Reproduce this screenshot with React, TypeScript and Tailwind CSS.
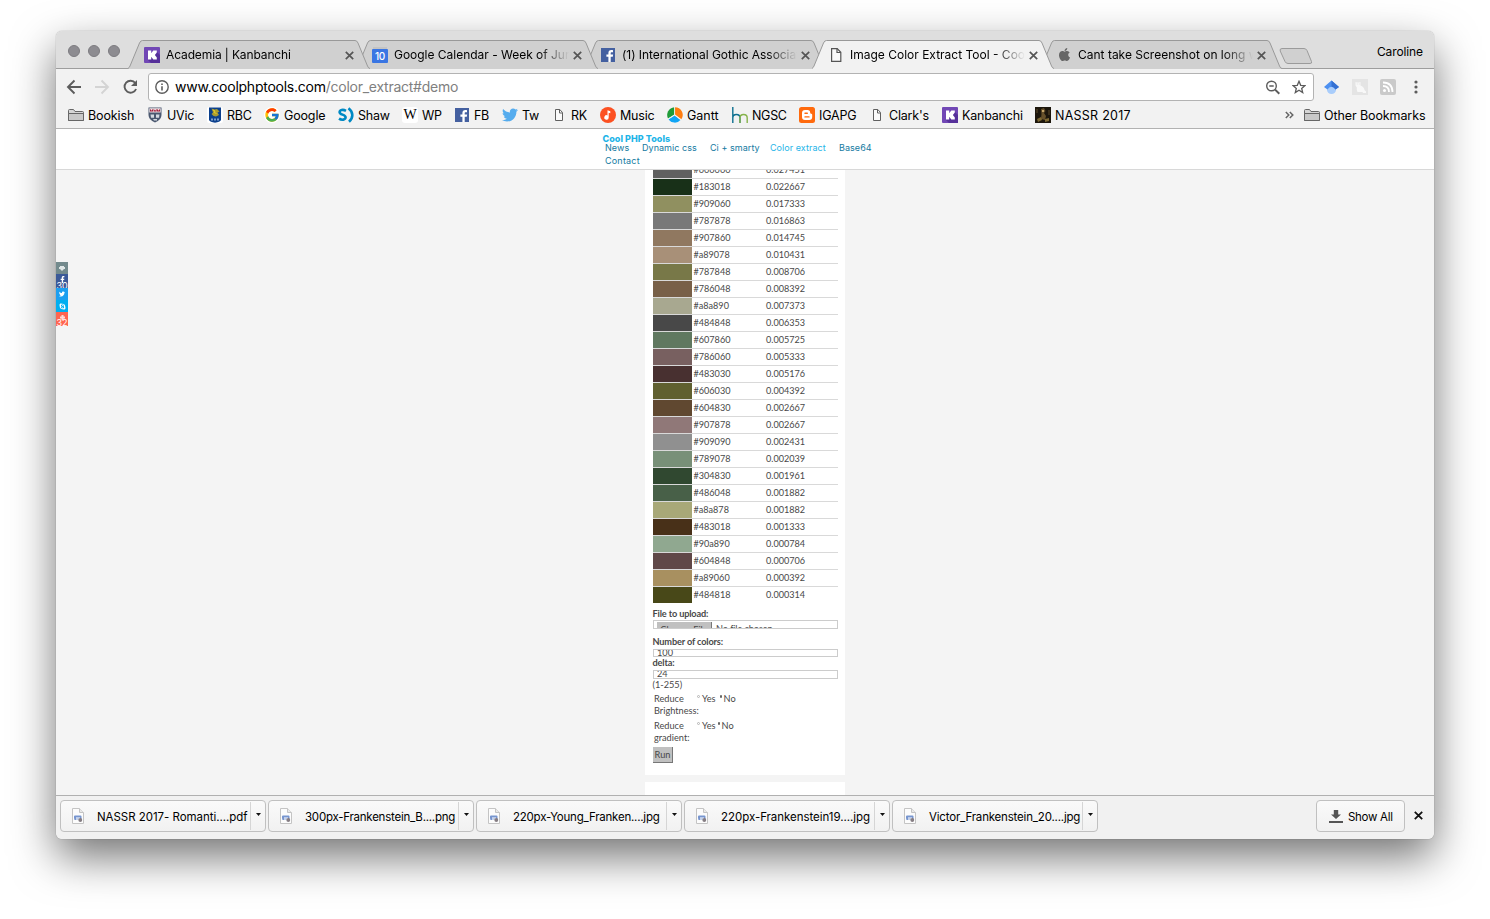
import React from "react";
import { FaFacebookF, FaTwitter, FaApple, FaSkype } from "react-icons/fa";
import { FcGoogle } from "react-icons/fc";

function KanbanchiIcon() {
  return (
    <svg width="16" height="16" viewBox="0 0 16 16" className="shrink-0">
      <rect width="16" height="16" rx="1" fill="#7147b5" />
      <path d="M12 4l4 4v8H7l-3-3z" fill="#56309a" />
      <path d="M4 3.500h3.200v2.700L9.300 3.500H12.800v2L10.900 8l1.900 2.500v2H9.300L7.200 9.800v2.700H4z" fill="#fff" />
    </svg>
  );
}

function CalendarIcon() {
  return (
    <span className="flex h-4 w-4 shrink-0 flex-col">
      <span className="mx-px h-[2px] bg-[#c4c4c4]" />
      <span className="flex h-[14px] items-center justify-center rounded-[1px] bg-[#3a76e3] text-[10px] font-medium leading-none tracking-[-0.3px] text-white">10</span>
    </span>
  );
}

function FacebookIcon() {
  return (
    <svg width="16" height="16" viewBox="0 0 16 16" className="shrink-0">
      <rect x="1" y="1" width="14" height="14" fill="#4460a0" />
      <path d="M10.700 15V9.800h2.100l.3-2.300h-2.400V6.300c0-.6.2-1 1-1h1.300V3.200c-.2 0-.9-.1-1.700-.1-1.800 0-2.900 1-2.900 2.900v1.500H6.400v2.300h2V15z" fill="#fff" />
    </svg>
  );
}

function PageIcon() {
  return (
    <svg width="16" height="16" viewBox="0 0 16 16" className="shrink-0" fill="#fafafa" stroke="#606060" strokeWidth="1">
      <path d="M4.500 2.500h4.300L11.500 5.500v8h-7z" />
      <path d="M8.500 2.500v3.500h3" fill="none" />
    </svg>
  );
}

function TallPageIcon() {
  return (
    <svg width="16" height="16" viewBox="0 0 16 16" className="shrink-0" fill="#fafafa" stroke="#555" strokeWidth="1.200">
      <path d="M3.600 1.600h5.600l3.600 3.700v9.100H3.600z" />
      <path d="M9 1.600v3.900h3.800" fill="none" />
    </svg>
  );
}

function FolderIcon() {
  return (
    <svg width="16" height="16" viewBox="0 0 16 16" className="shrink-0" fill="#c9c9c9" stroke="#666" strokeWidth="1">
      <path d="M.5 13.500V3.500q0-1 1-1h4l1.500 2h7.500q1 0 1 1v8z" fill="#d6d6d6" />
      <path d="M.5 6.500h15v7H.5z" />
    </svg>
  );
}

function UvicIcon() {
  return (
    <svg width="16" height="16" viewBox="0 0 16 16" className="shrink-0">
      <path d="M1.500 .5h13v7.500q0 5-6.500 7.500Q1.500 13 1.500 8z" fill="#4b5870" />
      <path d="M2.300 1.200h11.400V5.500H2.300z" fill="#f1e3e6" />
      <path d="M3 1.800l1.500 2L6 1.800v2.700H3zM6.600 1.800l1.500 2 1.500-2v2.700h-3zM10 1.800l1.500 2 1.500-2v2.700h-3z" fill="#a31d3a" />
      <path d="M3.500 7.500H7v3.200H4zM9 7.500h3.500l-.5 3.200H9zM6 12h4v1.500H7z" fill="#d5d9e0" />
    </svg>
  );
}

function RbcIcon() {
  return (
    <svg width="16" height="16" viewBox="0 0 16 16" className="shrink-0">
      <rect width="16" height="16" rx="2" fill="#fff" />
      <path d="M2 .5h12V13q-1 2.200-6 2.700Q3 15.200 2 13z" fill="#0b3f8c" />
      <path d="M4.500 1.500l3 1 2.500-.5 2.500 2.500-2 1 1.500 2.500L9 9.500 6.500 9 4.500 7 6 5.500z" fill="#a99b2f" />
      <path d="M6 3l2 1-1 1.500 2.500 1" stroke="#e8cf2a" fill="none" />
      <path d="M4 11.500h2v2H4zM7 11.500h2v2H7zM10 11.500h2v2h-2z" fill="#7f9fcb" />
    </svg>
  );
}

function ShawIcon() {
  return (
    <svg width="16" height="16" viewBox="0 0 16 16" className="shrink-0" fill="none" stroke="#0089c4" strokeWidth="2.600">
      <path d="M8 3.800C5 2.200 1.600 2.900 1.600 5.200 1.600 8 7.600 7.300 7.600 10.300c0 2.500-3.800 3.200-6.600 1.400" />
      <path d="M10.500 1.200c5 4 5 9.600.5 13.600" />
    </svg>
  );
}

function WikiIcon() {
  return (
    <span className="flex h-4 w-4 shrink-0 items-center justify-center rounded-[3px] bg-white font-['Liberation_Serif',serif] text-[14px] leading-none text-black">W</span>
  );
}

function MusicIcon() {
  return (
    <svg width="16" height="16" viewBox="0 0 16 16" className="shrink-0">
      <circle cx="8" cy="8" r="8" fill="#fc5122" />
      <path d="M7.500 3.200l2.800 1v2l-1.600-.5v4.800a2.200 2.200 0 1 1-1.200-2z" fill="#fff" />
    </svg>
  );
}

function GanttIcon() {
  return (
    <svg width="16" height="16" viewBox="0 0 16 16" className="shrink-0">
      <path d="M8 7.500V.2a7.800 7.800 0 0 1 6.400 12.100z" fill="#ff7d0f" />
      <path d="M7.300 7.500V.2A7.800 7.800 0 0 0 1 11.500z" fill="#1f9b38" />
      <path d="M7.600 8.600L1.500 12.500a7.800 7.800 0 0 0 12 .6z" fill="#10a5f5" />
      <path d="M7.600 8V0M7.600 8L.8 12.200M7.600 8l6.700 5" stroke="#f2f2f2" strokeWidth=".8" />
    </svg>
  );
}

function HmIcon() {
  return (
    <svg width="16" height="16" viewBox="0 0 16 16" className="shrink-0" fill="none" strokeWidth="1.400">
      <path d="M.8 0v16M.8 11q0-3.500 3.600-3.500T8 11v5" stroke="#0d6f8f" />
      <path d="M8 16v-5q0-3.500 3.600-3.500T15.200 11v5" stroke="#86b34b" />
    </svg>
  );
}

function BloggerIcon() {
  return (
    <svg width="16" height="16" viewBox="0 0 16 16" className="shrink-0">
      <rect width="16" height="16" rx="2.500" fill="#ff6a0d" />
      <path d="M6 3h2.500q2.700 0 2.700 2.700 0 1 1 1 1 0 1 1V10q0 3-3 3H6q-3 0-3-3V6q0-3 3-3z" fill="#fff" />
      <path d="M6 6.200h2.300M6 9.900h4" stroke="#ff6a0d" strokeWidth="1.400" strokeLinecap="round" />
    </svg>
  );
}

function PaintingIcon() {
  return (
    <svg width="16" height="16" viewBox="0 0 16 16" className="shrink-0">
      <rect width="16" height="16" fill="#1c160c" />
      <path d="M6 2l3-1 1.500 3L9 6l2 3-1 4-4-1 .500-5z" fill="#66502a" />
      <path d="M7 3h2v2H7z" fill="#c3a468" />
      <path d="M2 12l4-2 1 3-4 2zM10 12l4-1v3l-4 1z" fill="#7d6832" />
      <path d="M1 2h2v4H1zM13 3h2v5h-2z" fill="#3b2f1b" />
    </svg>
  );
}

const TAB_Z = ["z-[5]", "z-[4]", "z-[3]", "z-[10]", "z-[1]"];

const tabs = [
  { title: "Academia | Kanbanchi", icon: <KanbanchiIcon />, track: "tracking-[-0.12px]" },
  { title: "Google Calendar - Week of June", icon: <CalendarIcon />, track: "tracking-[-0.02px]" },
  { title: "(1) International Gothic Association", icon: <FacebookIcon />, track: "tracking-[-0.05px]" },
  { title: "Image Color Extract Tool - Cool", icon: <TallPageIcon />, track: "tracking-[0px]", active: true },
  { title: "Cant take Screenshot on long w", icon: <FaApple size={15} color="#666" className="shrink-0" />, track: "tracking-[0px]" },
];

const bookmarks = [
  { label: "Bookish", icon: <FolderIcon />, w: "w-[79px]", track: "tracking-[-0.12px]" },
  { label: "UVic", icon: <UvicIcon />, w: "w-[60px]", track: "tracking-[-0.2px]" },
  { label: "RBC", icon: <RbcIcon />, w: "w-[57px]", track: "tracking-[-0.2px]" },
  { label: "Google", icon: <FcGoogle size={16} className="shrink-0 rounded-full bg-white" />, w: "w-[74px]", track: "tracking-[-0.15px]" },
  { label: "Shaw", icon: <ShawIcon />, w: "w-[64px]", track: "tracking-[-0.2px]" },
  { label: "WP", icon: <WikiIcon />, w: "w-[52px]", track: "tracking-[-0.3px]" },
  { label: "FB", icon: <FacebookIcon />, w: "w-[48px]", track: "tracking-[-0.3px]" },
  { label: "Tw", icon: <FaTwitter size={16} color="#55acee" className="shrink-0" />, w: "w-[49px]", track: "tracking-[-0.2px]" },
  { label: "RK", icon: <PageIcon />, w: "w-[49px]", track: "tracking-[-0.3px]" },
  { label: "Music", icon: <MusicIcon />, w: "w-[67px]", track: "tracking-[-0.2px]" },
  { label: "Gantt", icon: <GanttIcon />, w: "w-[65px]", track: "tracking-[0px]" },
  { label: "NGSC", icon: <HmIcon />, w: "w-[67px]", track: "tracking-[-0.3px]" },
  { label: "IGAPG", icon: <BloggerIcon />, w: "w-[70px]", track: "tracking-[-0.2px]" },
  { label: "Clark's", icon: <PageIcon />, w: "w-[73px]", track: "tracking-[-0.2px]" },
  { label: "Kanbanchi", icon: <KanbanchiIcon />, w: "w-[93px]", track: "tracking-[-0.2px]" },
  { label: "NASSR 2017", icon: <PaintingIcon />, w: "w-[110px]", track: "tracking-[0.25px]" },
];

const colors: [string, string][] = [
  ["606060", "0.027451"], ["183018", "0.022667"], ["909060", "0.017333"], ["787878", "0.016863"],
  ["907860", "0.014745"], ["a89078", "0.010431"], ["787848", "0.008706"], ["786048", "0.008392"],
  ["a8a890", "0.007373"], ["484848", "0.006353"], ["607860", "0.005725"], ["786060", "0.005333"],
  ["483030", "0.005176"], ["606030", "0.004392"], ["604830", "0.002667"], ["907878", "0.002667"],
  ["909090", "0.002431"], ["789078", "0.002039"], ["304830", "0.001961"], ["486048", "0.001882"],
  ["a8a878", "0.001882"], ["483018", "0.001333"], ["90a890", "0.000784"], ["604848", "0.000706"],
  ["a89060", "0.000392"], ["484818", "0.000314"],
];

const downloads = [
  { name: "NASSR 2017- Romanti....pdf", track: "tracking-[-0.04px]" },
  { name: "300px-Frankenstein_B....png", track: "tracking-[-0.24px]" },
  { name: "220px-Young_Franken....jpg", track: "tracking-[-0.22px]" },
  { name: "220px-Frankenstein19....jpg", track: "tracking-[-0.04px]" },
  { name: "Victor_Frankenstein_20....jpg", track: "tracking-[-0.19px]" },
];

function TabStrip() {
  return (
    <div className="flex h-[38px] shrink-0 border-b border-[#9d9d9d] bg-[#dedede]">
      <div className="flex w-[72px] shrink-0 gap-2 pl-3 pt-[14px]">
        <span className="h-3 w-3 rounded-full border border-[#7c7b80] bg-[#8d8c91]" />
        <span className="h-3 w-3 rounded-full border border-[#7c7b80] bg-[#8d8c91]" />
        <span className="h-3 w-3 rounded-full border border-[#7c7b80] bg-[#8d8c91]" />
      </div>
      <div className="flex pt-[9px]">
        {tabs.map((t, i) => (
          <div key={t.title} className={`relative flex h-[29px] w-[228px] shrink-0 items-center pl-4 ${TAB_Z[i]}`}>
            <svg width="244" height="29" className="absolute left-0 top-0" fill={t.active ? "#f2f2f2" : "#d0d0d0"}>
              <path d="M0 28.500C1 28 1.500 27 2 26L11.500 3Q12.500 .5 14.500 .5H227Q229 .5 230 3L239.500 26Q240.500 28.500 242 28.500V29H0z" />
              <path d="M0 28.500C1 28 1.500 27 2 26L11.500 3Q12.500 .5 14.500 .5H227Q229 .5 230 3L239.500 26Q240.500 28.500 242 28.500" fill="none" stroke="#999" />
            </svg>
            <span className="relative flex w-4 shrink-0 justify-center">{t.icon}</span>
            <span className={`relative ml-[6px] w-[175px] overflow-hidden whitespace-nowrap text-[12px] text-black [mask-image:linear-gradient(to_right,black_145px,transparent_175px)] ${t.track}`}>
              {t.title}
            </span>
            <svg width="9" height="9" viewBox="0 0 9 9" className="relative ml-[3.500px] mt-px shrink-0" stroke="#555" strokeWidth="1.700">
              <path d="M.8 .8l7.400 7.400M8.200 .8L.8 8.200" />
            </svg>
          </div>
        ))}
      </div>
      <svg width="34" height="17" viewBox="0 0 34 17" className="ml-[11px] mt-[17px] shrink-0">
        <path d="M3 .5h22q2 0 3 2l4.500 11q.8 2-1.500 2H9q-2 0-3-2L1.200 3Q.5 .5 3 .5z" fill="#d0d0d0" stroke="#9b9b9b" />
      </svg>
      <span className="ml-auto pr-[11px] pt-3 text-[12px] leading-[18px] tracking-[-0.1px] text-black">Caroline</span>
    </div>
  );
}

function Toolbar() {
  return (
    <div className="flex h-[32px] shrink-0 items-center bg-[#f2f2f2] pt-[4px]">
      <svg width="84" height="18" viewBox="0 0 84 18" className="ml-[10px] shrink-0" fill="none" strokeWidth="1.900">
        <path d="M15 9H2.500M8.500 2.500L2 9l6.500 6.500" stroke="#5c5c5c" />
        <path d="M29 9h12.500M35.500 2.500L42 9l-6.500 6.500" stroke="#d4d4d4" />
        <path d="M69.300 5a6 6 0 1 0 .8 6" stroke="#5c5c5c" />
        <path d="M71 2v6h-6z" fill="#5c5c5c" />
      </svg>
      <div className="-ml-[2px] flex h-[28px] w-[1166px] shrink-0 items-center rounded-[3px] border border-[#b3b3b3] bg-white">
        <svg width="14" height="14" viewBox="0 0 14 14" className="ml-[6px] shrink-0" fill="none" stroke="#5c5c5c" strokeWidth="1.400">
          <circle cx="7" cy="7" r="6.200" />
          <path d="M7 6.200V10.500M7 3.400v1.500" strokeWidth="1.600" />
        </svg>
        <span className="-mt-[2px] ml-[6px] whitespace-nowrap text-[14px] tracking-[-0.25px] text-[#808080]">
          <span className="text-black">www.coolphptools.com</span>/color_extract#demo
        </span>
        <svg width="15" height="15" viewBox="0 0 15 15" className="ml-auto shrink-0" fill="none" stroke="#5c5c5c" strokeWidth="1.400">
          <circle cx="6.500" cy="6" r="4.800" />
          <path d="M4.300 6h4.400" />
          <path d="M10.100 9.600l4.200 4.200" strokeWidth="2" />
        </svg>
        <svg width="14" height="14" viewBox="0 0 14 14" className="ml-[12px] mr-[7px] shrink-0" fill="none" stroke="#5c5c5c" strokeWidth="1.300">
          <path d="M7 1.300l1.700 4 4.200.3-3.200 2.800 1 4.200L7 10.300l-3.700 2.300 1-4.200L1.100 5.600l4.200-.3z" />
        </svg>
      </div>
      <svg width="15" height="15" viewBox="0 0 15 15" className="ml-[10px] shrink-0">
        <circle cx="7.500" cy="9.500" r="4.600" fill="#a9cdfb" />
        <path d="M7.500 .5L0 7l3.500 2.500Q5 6.700 7.500 6.700t4 2.800L15 7z" fill="#4d90f0" />
        <path d="M7.500 .5L15 7l-3.500 2.500Q10 6.700 7.500 6.700z" fill="#3470d2" />
      </svg>
      <svg width="16" height="16" viewBox="0 0 16 16" className="ml-[13px] shrink-0">
        <rect width="16" height="16" fill="#e4e4e4" />
        <path d="M3.500 3l1.500.6h2L8.500 3v3.500q3.500 1 4 4.500l1.500 1.500V14h-3l-.5-1H5.500q-1-2-.7-4.500L3.500 6.500z" fill="#f8f8f8" />
        <path d="M4.800 5h.8M6.800 5h.8" stroke="#dcdcdc" />
      </svg>
      <svg width="16" height="16" viewBox="0 0 16 16" className="ml-[12px] shrink-0" fill="none" stroke="#fff" strokeWidth="1.800">
        <rect width="16" height="16" rx="2" fill="#cacaca" stroke="none" />
        <circle cx="4.500" cy="11.500" r="1.500" fill="#fff" stroke="none" />
        <path d="M3 7q6 0 6 6M3 3.500q9.500 0 9.500 9.500" />
      </svg>
      <svg width="4" height="14" viewBox="0 0 4 14" className="ml-[18px] shrink-0" fill="#5c5c5c">
        <circle cx="2" cy="2" r="1.600" /><circle cx="2" cy="7" r="1.600" /><circle cx="2" cy="12" r="1.600" />
      </svg>
    </div>
  );
}

function BookmarksBar() {
  return (
    <div className="flex h-[28px] shrink-0 items-center border-b border-[#b2b2b2] bg-[#f2f2f2] pl-3 text-[12.500px] text-black">
      {bookmarks.map((b) => (
        <div key={b.label} className={`flex shrink-0 items-center gap-1 whitespace-nowrap ${b.w}`}>
          {b.icon}
          <span className={`pt-[2px] leading-[18px] ${b.track}`}>{b.label}</span>
        </div>
      ))}
      <svg width="9" height="8" viewBox="0 0 9 8" className="ml-auto shrink-0" fill="none" stroke="#666" strokeWidth="1.500">
        <path d="M.8 1l3 3-3 3M4.800 1l3 3-3 3" />
      </svg>
      <div className="ml-[10px] flex w-[130px] shrink-0 items-center gap-1 whitespace-nowrap">
        <FolderIcon />
        <span className="pt-[2px] leading-[18px] tracking-[-0.1px]">Other Bookmarks</span>
      </div>
    </div>
  );
}

function SiteHeader() {
  return (
    <header className="relative z-10 h-[41px] shrink-0 border-b border-[#d8d8d8] bg-white pl-[546.500px] pt-[5px] text-[#137a9f]">
      <div className="h-[8px] text-[9px] font-extrabold leading-[10px] tracking-[0.05px] text-[#1fb5e8]">Cool PHP Tools</div>
      <nav className="flex pl-[2.500px] text-[9px] leading-[11px] tracking-[0.05px]">
        <span className="w-[37px]">News</span>
        <span className="w-[68px]">Dynamic css</span>
        <span className="w-[60px]">Ci + smarty</span>
        <span className="w-[69px] text-[#1fb5e8]">Color extract</span>
        <span>Base64</span>
      </nav>
      <div className="mt-[2px] pl-[2.500px] text-[9px] leading-[11px] tracking-[0.2px]">Contact</div>
    </header>
  );
}

function RadioRow({ label, second, gap }: { label: string; second: string; gap: string }) {
  return (
    <div className="flex h-[27px] pl-px leading-[12px]">
      <span className="w-[43px]">{label}<br />{second}</span>
      <span className="mt-[2px] h-[3px] w-[3px] rounded-full border border-[#b5b5b5]" />
      <span className="ml-[2px]">Yes</span>
      <span className={`mt-[2px] h-[3px] w-[2px] rounded-full bg-[#666] ${gap}`} />
      <span className="ml-[2px]">No</span>
    </div>
  );
}

function ExtractCard() {
  return (
    <section className="h-[613px] w-[200px] bg-white pl-2 pr-[7px]">
      {colors.map(([hex, share], i) => (
        <div key={hex} className={`flex h-[17px] text-[9.100px] leading-[15px] ${i < 25 ? "border-b border-[#d9d9d9]" : ""}`}>
          <span className="h-4 w-[39px]" style={{ backgroundColor: `#${hex}` }} />
          <span className="w-[74px] pl-[1.500px]">#{hex}</span>
          <span>{share}</span>
        </div>
      ))}
      <form className="pt-1 text-[9.200px]" onSubmit={(e) => e.preventDefault()}>
        <div className="-ml-[0.500px] h-[12px] font-bold leading-[12px] tracking-[-0.15px]">File to upload:</div>
        <div className="flex h-[9px] overflow-hidden border border-[#ccc] pl-[3px] pt-px">
          <span className="h-[16px] w-[55px] shrink-0 border-r border-[#777] bg-[#c0c0c0] text-center leading-[15px]">Choose File</span>
          <span className="ml-[4px] leading-[14px] tracking-[-0.1px]">No file chosen</span>
        </div>
        <div className="-ml-[0.500px] mt-[7px] h-[13px] font-bold leading-[12px] tracking-[-0.15px]">Number of colors:</div>
        <div className="h-[8px] overflow-hidden border border-[#ccc] pl-[3px] leading-[6px]">100</div>
        <div className="-ml-[0.500px] h-[13px] font-bold leading-[12px] tracking-[-0.15px]">delta:</div>
        <div className="h-[9px] overflow-hidden border border-[#ccc] pl-[3px] leading-[6px]">24</div>
        <div className="-ml-[0.500px] h-[14px] leading-[12px]">(1-255)</div>
        <RadioRow label="Reduce" second="Brightness:" gap="ml-[4px]" />
        <RadioRow label="Reduce" second="gradient:" gap="ml-[2px]" />
        <button className="block h-[16px] w-[20px] border-b border-r border-[#777] bg-[#c0c0c0] leading-[15px]">Run</button>
      </form>
    </section>
  );
}

function ShareBar() {
  return (
    <aside className="absolute left-0 top-[133px] z-20 w-3 text-[9px] text-white">
      <div className="flex h-3 items-center justify-center bg-[#738a8d]">
        <svg width="6" height="5" viewBox="0 0 6 5" fill="#dfe6e6"><path d="M1 0h4v1h1v2H5L3 5 1 3H0V1h1z" /></svg>
      </div>
      <div className="flex h-[14px] flex-col items-center overflow-hidden bg-[#3b5998] pt-[2px]">
        <FaFacebookF size={7} className="shrink-0" /><span className="-mt-px leading-[8px]">30</span>
      </div>
      <div className="flex h-3 items-center justify-center bg-[#1d9ff0]"><FaTwitter size={6} /></div>
      <div className="flex h-3 items-center justify-center bg-[#00aff0]"><FaSkype size={7} /></div>
      <div className="flex h-[14px] flex-col items-center overflow-hidden bg-[#ff6550] pt-[3px]">
        <svg width="5" height="5" viewBox="0 0 5 5" className="shrink-0" fill="#ffdcd6"><path d="M1.500 0h2v1.500H5v2H3.500V5h-2V3.500H0v-2h1.500z" /></svg>
        <span className="-mt-px leading-[8px]">32</span>
      </div>
    </aside>
  );
}

function DownloadBar() {
  return (
    <footer className="flex h-[44px] shrink-0 items-start border-t border-[#b0b0b0] bg-[#f1f1f1] pl-1 pt-1 text-[11.500px] text-black">
      {downloads.map(({ name, track }) => (
        <div key={name} className="mr-[2px] flex h-8 w-[206px] shrink-0 items-center rounded-[4px] border border-[#c0c0c0] bg-linear-to-b from-[#fafafa] to-[#f1f1f1]">
          <svg width="12" height="16" viewBox="0 0 12 16" className="ml-[11px] shrink-0">
            <path d="M.5 .5h7l4 4v11H.5z" fill="#fcfcfc" stroke="#c4c4c4" />
            <path d="M7.500 .5v4h4" fill="#e9e9e9" stroke="#c4c4c4" />
            <path d="M2 10V8.500q0-1 1-1h5.500q1 0 1 1V11H8V9.500H4V12H2.500z" fill="#7795cf" />
            <path d="M4 9.800h3v2.200H4z" fill="#c4d2ec" />
            <circle cx="8.300" cy="12" r="1.900" fill="#857d83" />
          </svg>
          <span className={`ml-[13px] w-[153px] whitespace-nowrap pt-[2px] leading-[16px] ${track}`}>{name}</span>
          <span className="h-7 w-px shrink-0 bg-[#d5d5d5]" />
          <svg width="5" height="3" viewBox="0 0 5 3" className="-mt-[3px] ml-[4.500px] shrink-0"><path d="M0 0h5L2.500 3z" fill="#111" /></svg>
        </div>
      ))}
      <div className="ml-auto flex h-8 w-[89px] items-center rounded-[4px] border border-[#c0c0c0] bg-linear-to-b from-[#fafafa] to-[#f1f1f1]">
        <svg width="14" height="14" viewBox="0 0 14 14" className="ml-3 shrink-0" fill="#555">
          <path d="M4.800 1h4.400v4.500h2.800L7 10 2 5.500h2.800zM0 12h14v2H0z" />
        </svg>
        <span className="ml-[5px] whitespace-nowrap pt-[2px] leading-[16px] tracking-[-0.3px]">Show All</span>
      </div>
      <svg width="9" height="9" viewBox="0 0 9 9" className="ml-[9px] mr-[11px] mt-[11px] shrink-0" stroke="#111" strokeWidth="1.800">
        <path d="M.8 .8l7.400 7.400M8.200 .8L.8 8.200" />
      </svg>
    </footer>
  );
}

export default function App() {
  return (
    <div className="h-[919px] w-[1490px] overflow-hidden bg-white pl-[56px] pt-[31px] font-['Inter',sans-serif]">
      <div className="h-[808px] w-[1378px] rounded-[6px] shadow-[0_18px_44px_rgba(0,0,0,0.55),0_0_1px_rgba(0,0,0,0.5)]">
        <div className="flex h-full flex-col overflow-hidden rounded-[6px]">
          <TabStrip />
          <Toolbar />
          <BookmarksBar />
          <main className="relative flex h-[666px] shrink-0 flex-col overflow-hidden bg-[#f4f4f4]">
            <SiteHeader />
            <ShareBar />
            <div className="-mt-2 flex flex-col items-center gap-[7px] font-['Lato',sans-serif] text-[#484848]">
              <ExtractCard />
              <section className="h-5 w-[200px] shrink-0 bg-white" />
            </div>
          </main>
          <DownloadBar />
        </div>
      </div>
    </div>
  );
}
